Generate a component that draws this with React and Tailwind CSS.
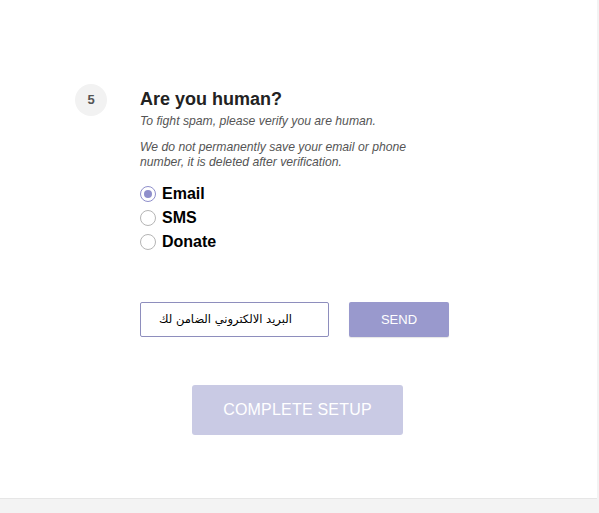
import React from "react";

export default function App() {
  return (
    <div className="w-full h-[513px] bg-[#f3f3f3] overflow-hidden" style={{ fontFamily: '"Liberation Sans", Arial, sans-serif' }}>
      <div className="w-[597px] h-[499px] bg-white border-b border-[#e6e6e6] pt-[84px] pl-[75px]">
        <div className="flex">
          <div className="w-8 h-8 rounded-full bg-[#f2f2f2] flex items-center justify-center text-[13px] font-bold text-[#555]">5</div>
          <div className="ml-[33px] pt-[5px]">
            <h2 className="text-[18px] leading-[21px] font-bold text-[#222]">Are you human?</h2>
            <p className="text-[12.2px] leading-[15px] italic text-[#555] mt-[4px]">To fight spam, please verify you are human.</p>
            <p className="text-[12.2px] leading-[15px] italic text-[#555] mt-[11px] w-[280px]">We do not permanently save your email or phone number, it is deleted after verification.</p>
            <div className="mt-[12px] flex flex-col">
              {[
                ["Email", true],
                ["SMS", false],
                ["Donate", false],
              ].map(([label, checked]) => (
                <label key={label} className="flex items-center h-6 text-[16px] font-bold text-black">
                  <span className={"w-4 h-4 rounded-full border flex items-center justify-center bg-white " + (checked ? "border-[#8f8fcb]" : "border-[#b5b5b5]")}>
                    {checked && <span className="w-2 h-2 rounded-full bg-[#8f8fcb]" />}
                  </span>
                  <span className="ml-[6px]">{label}</span>
                </label>
              ))}
            </div>
            <div className="flex mt-[48px]">
              <div className="w-[189px] h-[35px] border border-[#8e8ebd] rounded-[2px] flex items-center justify-center pr-[18px] text-[11.5px] text-black whitespace-nowrap" style={{ fontFamily: '"DejaVu Sans", sans-serif' }}>
                <span dir="rtl">البريد الالكتروني الضامن لك</span>
              </div>
              <button className="ml-[20px] w-[100px] h-[35px] bg-[#9999cd] rounded-[2px] text-white text-[13px] shadow-[0_1px_1px_rgba(0,0,0,0.1)]">SEND</button>
            </div>
            <button className="mt-[48px] ml-[52px] w-[211px] h-[50px] bg-[#c9cae4] rounded-[3px] text-white text-[16px] tracking-[0.2px]">COMPLETE SETUP</button>
          </div>
        </div>
      </div>
    </div>
  );
}
